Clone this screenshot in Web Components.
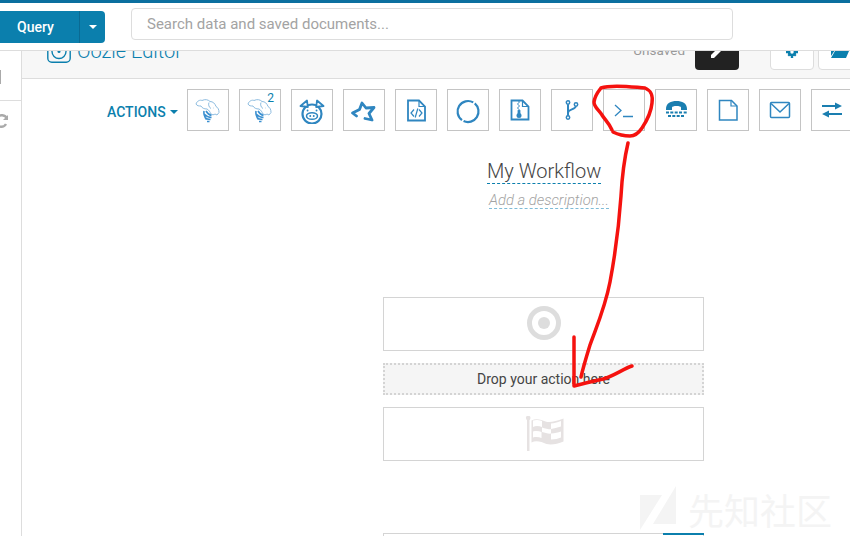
<!DOCTYPE html>
<html>
<head>
<meta charset="utf-8">
<style>
  html, body { margin: 0; height: 536px; overflow: hidden; background: #fff; font-family: Roboto, "Liberation Sans", sans-serif; }
  #page { position: relative; width: 850px; height: 536px; overflow: hidden; }
  #below { display: flex; height: 485px; }
  #main { flex: 1; min-width: 0; display: flex; flex-direction: column; overflow: hidden; }
</style>
</head>
<body>
<div id="page">
  <hue-nav></hue-nav>
  <div id="below">
    <hue-sidebar></hue-sidebar>
    <div id="main">
      <editor-header></editor-header>
      <actions-bar>
        <action-tile><svg viewBox="0 0 26 26" fill="none" stroke="#8dbce0" stroke-width="1"><path d="M1 6C2 3 5 1.500 7 2.500c3-1.500 6-1 8 1 3 0 5 2 6 5 2 1 3 3 3 6l-2 2.500-2-1c-1 1-3 1-4 0-1-2-2-4-4-5-3 0-5-1-6-3C4 8 2 8 1 6z"/><path d="M14 4.500c-1 2 0 5 2 6M18.500 10h.5"/><path d="M9 13c-.5 3 .5 6 2.500 8.500M11 13c1.500 2.500 3 4 5.500 4.500M9 16c2 2 4.500 3.500 7.500 3.500M10 19.500c1 1.300 3 2 5.500 2M12 23.500l2.500 0" stroke="#3a8fd0" stroke-width="1.600"/></svg></action-tile>
        <action-tile sup="2"><svg viewBox="0 0 26 26" fill="none" stroke="#8dbce0" stroke-width="1"><path d="M1 6C2 3 5 1.500 7 2.500c3-1.500 6-1 8 1 3 0 5 2 6 5 2 1 3 3 3 6l-2 2.500-2-1c-1 1-3 1-4 0-1-2-2-4-4-5-3 0-5-1-6-3C4 8 2 8 1 6z"/><path d="M14 4.500c-1 2 0 5 2 6M18.500 10h.5"/><path d="M9 13c-.5 3 .5 6 2.500 8.500M11 13c1.500 2.500 3 4 5.500 4.500M9 16c2 2 4.500 3.500 7.500 3.500M10 19.500c1 1.300 3 2 5.500 2M12 23.500l2.500 0" stroke="#3a8fd0" stroke-width="1.600"/></svg></action-tile>
        <action-tile><svg viewBox="0 0 26 26" fill="none" stroke="#2f86c0" stroke-width="2.200"><circle cx="13" cy="16" r="9.500"/><path d="M1.500 8 8 2.500 8.800 9zM24.500 8 18 2.500 17.200 9z" stroke-linejoin="round" fill="#fff" stroke-width="1.800"/><ellipse cx="13" cy="18" rx="5.500" ry="3.300" stroke-width="1.500"/><path d="M11.200 18h.1M14.700 18h.1M8.500 12.500h.1M17.500 12.500h.1" stroke-linecap="round" stroke-width="1.800"/></svg></action-tile>
        <action-tile><svg viewBox="0 0 26 26" fill="none" stroke="#2f86c0" stroke-width="2.800" stroke-linecap="round" stroke-linejoin="round"><path d="M5.500 18 1.500 15 8.500 11.500 11 5 15 10 23 9.500 18 15.500 21 22 14 20.500"/></svg></action-tile>
        <action-tile><svg viewBox="0 0 26 26" fill="none" stroke="#2f86c0" stroke-width="1.800"><path d="M5 2.500h11l6 6v14H5z"/><path d="M16 2.500v6h6" stroke-width="1.200"/><path d="M11 11.500l-3 3.500 3 3.500M16 11.500l3 3.500-3 3.500M14.800 10.500l-2.600 9" stroke-width="1.200"/></svg></action-tile>
        <action-tile><svg viewBox="0 0 26 26" fill="none" stroke="#2f86c0" stroke-width="2.200"><path d="M19.750 5.460A10.500 10.500 0 0 1 8.560 23.020M6.980 22.100A10.500 10.500 0 0 1 18.250 4.410"/></svg></action-tile>
        <action-tile><svg viewBox="0 0 26 26" fill="none" stroke="#2f86c0" stroke-width="1.800"><path d="M4.500 2.500h11l6 6v13h-17z"/><path d="M15.500 2.500v6h6" stroke-width="1.200"/><path d="M11 4h2M10 6h2M11 8h2M10 10h2M11 12h2" stroke-width="1.200"/><path d="M11.500 13h1v2h-1z" fill="#2f86c0"/><circle cx="12" cy="17.500" r="2.500" fill="#2f86c0" stroke="none"/></svg></action-tile>
        <action-tile><svg viewBox="0 0 26 26" fill="none" stroke="#2f86c0" stroke-width="1.500"><circle cx="9" cy="4.500" r="1.700"/><circle cx="9" cy="19.500" r="1.700"/><circle cx="17" cy="6.500" r="1.700"/><path d="M9 6.200v11.600" stroke-width="2"/><path d="M9 15c0-4 7-3 8-6.800" stroke-width="1.800"/></svg></action-tile>
        <action-tile><svg viewBox="0 0 26 26" fill="none" stroke="#2f86c0" stroke-width="1.300"><path d="M4 7l6 5.500L4 18M12 18.500h10"/></svg></action-tile>
        <action-tile><svg viewBox="0 0 26 26" fill="#1a7eb0"><path d="M3 11C3 5 8 3 13.500 3S24 5 24 11v1h-6V9.500c0-1-2-1.500-4.500-1.500S9 8.500 9 9.500V12H3z"/><path d="M3 13.500h3v2H3zM7.300 13.500h3v2h-3zM11.700 13.500h3v2h-3zM16 13.500h3v2h-3zM20.700 13.500h3v2h-3zM5 17h3v2H5zM9.300 17h3v2h-3zM13.700 17h3v2h-3zM18 17h3v2h-3z"/></svg></action-tile>
        <action-tile><svg viewBox="0 0 26 26" fill="none" stroke="#2f86c0" stroke-width="1.500"><path d="M4.500 2.500h12l5.500 5.500v14H4.500z"/><path d="M16 2.500V8h6" stroke-width="1.200"/></svg></action-tile>
        <action-tile><svg viewBox="0 0 26 26" fill="none" stroke="#2f86c0" stroke-width="1.500"><rect x="3.500" y="4.500" width="19" height="15" rx="1"/><path d="M4 5.500 13 14l9-8.500"/></svg></action-tile>
        <action-tile><svg viewBox="0 0 26 26" fill="#1a7eb0"><path d="M3 7h13V4.500l7 3.500-7 3.500V9H3zM23 15H10v-2.500L3 16l7 3.500V17h13z"/></svg></action-tile>
      </actions-bar>
      <workflow-title></workflow-title>
      <workflow-graph></workflow-graph>
    </div>
  </div>
  <red-scribble></red-scribble>
  <site-watermark></site-watermark>
</div>

<script>
class HueNav extends HTMLElement {
  constructor() {
    super()
    this.attachShadow({ mode: 'open' }).innerHTML = `
      <style>
        :host { display: block; height: 51px; box-sizing: border-box; background: #fff; border-top: 3px solid #0b6f9f; border-bottom: 1px solid #ddd; }
        .bar { display: flex; align-items: flex-start; padding-top: 8px; }
        .query { display: flex; width: 105px; height: 32px; background: #0b7fad; border-radius: 0 4px 4px 0; color: #fff; font: 500 14px Roboto, sans-serif; }
        .label { width: 80px; box-sizing: border-box; padding-left: 17px; line-height: 32px; border-right: 1px solid #0a6a93; }
        .caret { flex: 1; display: flex; align-items: center; justify-content: center; }
        .caret i { border: 4px solid transparent; border-top-color: #fff; border-bottom: 0; }
        .search { margin: -3px 0 0 26px; width: 602px; height: 32px; box-sizing: border-box; border: 1px solid #ddd; border-radius: 4px; padding-left: 15px; color: #a3a3a3; font: 15px/30px Roboto, sans-serif; }
      </style>
      <div class="bar">
        <div class="query"><div class="label">Query</div><div class="caret"><i></i></div></div>
        <div class="search">Search data and saved documents...</div>
      </div>`
  }
}
customElements.define('hue-nav', HueNav)

class HueSidebar extends HTMLElement {
  constructor() {
    super()
    this.attachShadow({ mode: 'open' }).innerHTML = `
      <style>
        :host { display: block; width: 22px; flex: none; box-sizing: border-box; border-right: 1px solid #ddd; overflow: hidden; }
        .top { height: 50px; border-bottom: 1px solid #ddd; box-sizing: border-box; padding-top: 19px; }
        .top i { display: block; width: 1px; height: 14px; background: #aaa; }
        svg { display: block; margin: 12px 0 0 -6px; }
      </style>
      <div class="top"><i></i></div>
      <svg width="15" height="16" viewBox="0 0 15 16" fill="none" stroke="#aaa" stroke-width="2.400"><path d="M13 6A5.500 5.500 0 0 0 3 5M2 10a5.500 5.500 0 0 0 10 1"/><path d="M14 2v5H9z" fill="#aaa" stroke="none"/></svg>`
  }
}
customElements.define('hue-sidebar', HueSidebar)

class EditorHeader extends HTMLElement {
  constructor() {
    super()
    this.attachShadow({ mode: 'open' }).innerHTML = `
      <style>
        :host { display: flex; flex: none; height: 28px; box-sizing: border-box; background: #f7f7f7; border-bottom: 1px solid #ddd; overflow: hidden; align-items: flex-end; padding: 0 0 0 25px; font-family: Roboto, sans-serif; }
        .name { display: flex; align-items: flex-end; gap: 6px; color: #0b7fad; font: 300 20px/26px Roboto, sans-serif; margin-bottom: 15px; white-space: nowrap; }
        .name svg { flex: none; }
        .name span { margin-bottom: -1px; }
        .side { margin-left: auto; display: flex; align-items: flex-end; flex: none; }
        .state { color: #999; font: 13.500px/16px Roboto, sans-serif; margin: 0 10px 20px 0; }
        .btn { box-sizing: border-box; height: 40px; margin-bottom: 8px; border-radius: 0 0 4px 4px; display: flex; align-items: flex-end; justify-content: center; padding-bottom: 11px; }
        .dark { width: 44px; background: #222; margin-right: 31px; }
        .light { width: 44px; background: #fff; border: 1px solid #ddd; margin-right: 4px; }
        .last { margin-right: -12px; }
      </style>
      <div class="name">
        <svg width="24" height="24" viewBox="0 0 24 24" fill="none" stroke="#0b7fad" stroke-width="1.400"><rect x=".8" y=".8" width="22.400" height="22.400" rx="4"/><circle cx="12" cy="12.500" r="7"/><circle cx="12" cy="12.500" r="1.500" fill="#0b7fad" stroke="none"/></svg>
        <span>Oozie Editor</span>
      </div>
      <div class="side">
        <div class="state">Unsaved</div>
        <div class="btn dark"><svg width="14" height="14" viewBox="0 0 14 14" fill="#fff"><path d="M1 10 10 1l3 3-9 9H1z"/></svg></div>
        <div class="btn light"><svg width="12" height="12" viewBox="0 0 12 12" fill="#0b7fad"><circle cx="6" cy="6" r="4.300"/><path d="M4.800 0h2.400v12H4.800zM0 4.800h12v2.400H0zM1.500 3 3 1.500 10.500 9 9 10.500zM9 1.500 10.500 3 3 10.500 1.500 9z"/><circle cx="6" cy="6" r="1.700" fill="#fff"/></svg></div>
        <div class="btn light last"><svg width="18" height="14" viewBox="0 0 18 14" fill="#0b7fad"><path d="M0 2h6l1 2h7v2H4L0 12zM4 7h14l-3 7H0z"/></svg></div>
      </div>`
  }
}
customElements.define('editor-header', EditorHeader)

class ActionsBar extends HTMLElement {
  constructor() {
    super()
    this.attachShadow({ mode: 'open' }).innerHTML = `
      <style>
        :host { display: flex; flex: none; align-items: center; gap: 10px; padding: 10px 0 0 85px; height: 42px; }
        .title { flex: none; width: 70px; padding-top: 4px; display: flex; align-items: center; gap: 4px; color: #0b7fad; font: 500 14px Roboto, sans-serif; }
        .title i { border: 4px solid transparent; border-top-color: #0b7fad; border-bottom: 0; }
      </style>
      <div class="title">ACTIONS<i></i></div>
      <slot></slot>`
  }
}
customElements.define('actions-bar', ActionsBar)

class ActionTile extends HTMLElement {
  constructor() {
    super()
    this.attachShadow({ mode: 'open' }).innerHTML = `
      <style>
        :host { display: flex; flex: none; position: relative; box-sizing: border-box; width: 42px; height: 42px; padding-top: 2px; border: 1px solid #c4c4c4; align-items: center; justify-content: center; }
        ::slotted(svg) { width: 26px; height: 26px; }
        sup { position: absolute; top: 1px; right: 6px; font: 12px/14px Roboto, sans-serif; color: #0b7fad; }
      </style>
      <slot></slot>`
    if (this.getAttribute('sup')) {
      const s = document.createElement('sup')
      s.textContent = this.getAttribute('sup')
      this.shadowRoot.appendChild(s)
    }
  }
}
customElements.define('action-tile', ActionTile)

class WorkflowTitle extends HTMLElement {
  constructor() {
    super()
    this.attachShadow({ mode: 'open' }).innerHTML = `
      <style>
        :host { display: flex; flex: none; flex-direction: column; padding: 28px 0 0 465px; align-items: flex-start; font-family: Roboto, sans-serif; }
        .name { font: 300 20px/24px Roboto, sans-serif; color: #444; border-bottom: 1px dashed #0b7fad; }
        .desc { margin: 8px 0 0 2px; font: italic 300 14.800px/16px Roboto, sans-serif; color: #a3a3a3; border-bottom: 1px dashed #7fbcd8; white-space: nowrap; }
      </style>
      <div class="name">My Workflow</div>
      <div class="desc">Add a description...</div>`
  }
}
customElements.define('workflow-title', WorkflowTitle)

class WorkflowGraph extends HTMLElement {
  constructor() {
    super()
    this.attachShadow({ mode: 'open' }).innerHTML = `
      <style>
        :host { display: flex; flex-direction: column; flex: none; width: 321px; margin: 88px 0 0 361px; font-family: Roboto, sans-serif; }
        .box { box-sizing: border-box; height: 54px; border: 1px solid #d4d4d4; display: flex; align-items: center; justify-content: center; background: #fff; }
        .box svg { margin-bottom: 3px; }
        .box .flag { margin: 0; }
        .drop { box-sizing: border-box; height: 32px; margin: 12px 0; border: 2px dotted #d4d4d4; background: #f5f5f5; display: flex; align-items: center; justify-content: center; font: 14px Roboto, sans-serif; color: #444; }
        .next { margin-top: 72px; height: 54px; box-sizing: border-box; border: 1px solid #d4d4d4; display: flex; justify-content: flex-end; }
        .next i { display: block; width: 41px; height: 2px; margin: -1px -1px 0 0; background: #0b7fad; }
      </style>
      <div class="box"><svg width="36" height="36" viewBox="0 0 36 36"><circle cx="18" cy="18" r="14.500" fill="none" stroke="#ddd" stroke-width="5"/><circle cx="18" cy="18" r="6" fill="#ddd"/></svg></div>
      <div class="drop">Drop your action here</div>
      <div class="box"><svg class="flag" width="42" height="36" viewBox="0 0 42 36" fill="#e6e2e2"><path d="M4 2h2.500v33H4z"/><circle cx="5.200" cy="2" r="2.300"/><path d="M8.500 4.500c5-2.500 10-.5 14 1 4 1.500 10 0 18-3v23c-6 2.500-12 3.500-17 2.500-5-2-10-4-15-1.500z"/><path d="M10 4.500c3-1 5.500-.5 9 .5v6c-3-1-6-1.500-9 0zM28 7.500c3 0 6-1 10-2.500v5.500c-4 1.200-7 2-10 2.500zM10 15.500c3-.8 6-.5 8.500.5v6c-2.500-1-5.500-1.400-8.500-.5zM19 11.500c3 1 6 1.800 9 1.800v4.300c-3 .2-6-.5-9-1.500zM28 17.500c4-.2 7-1 10-2v6c-3 1-6 2-10 2z" fill="#fff"/></svg></div>
      <div class="next"><i></i></div>`
  }
}
customElements.define('workflow-graph', WorkflowGraph)

// hand drawn red marks lying over the page
class RedScribble extends HTMLElement {
  constructor() {
    super()
    this.attachShadow({ mode: 'open' }).innerHTML = `
      <style>
        :host { display: block; position: absolute; left: 0; top: 0; width: 850px; height: 536px; pointer-events: none; }
        path { fill: none; stroke: #f5120f; stroke-width: 3.500; stroke-linecap: round; stroke-linejoin: round; }
      </style>
      <svg width="850" height="536" viewBox="0 0 850 536">
        <path d="M601 88C612 84 632 87 645 88C652 91 653 96 652 103C651 114 646 122 642 128C638 134 634 136 630 136C624 136 617 134 613 132M612 130C609 123 605 120 602 115C598 109 594 107 594 102C595 95 598 92 601 88"/>
        <path d="M628 143C624 160 622 178 621 196C619 225 616 250 610 282C605 308 596 328 590 345C586 358 583 368 581 377"/>
        <path d="M574 337C574 355 574 372 574 386C585 383 594 381 603 379C614 376 623 369 632 366"/>
      </svg>`
  }
}
customElements.define('red-scribble', RedScribble)

class SiteWatermark extends HTMLElement {
  constructor() {
    super()
    this.attachShadow({ mode: 'open' }).innerHTML = `
      <style>
        :host { display: flex; position: absolute; left: 638px; top: 486px; gap: 10px; align-items: center; pointer-events: none; }
        span { font: 36px/40px "Noto Sans CJK SC", sans-serif; color: #f4f4f4; letter-spacing: 0; white-space: nowrap; }
      </style>
      <svg width="40" height="46" viewBox="0 0 40 46" fill="#f4f4f4"><path d="M2 9h22L2 44z"/><path d="M38 0v38H15z"/></svg>
      <span>先知社区</span>`
  }
}
customElements.define('site-watermark', SiteWatermark)
</script>
</body>
</html>
